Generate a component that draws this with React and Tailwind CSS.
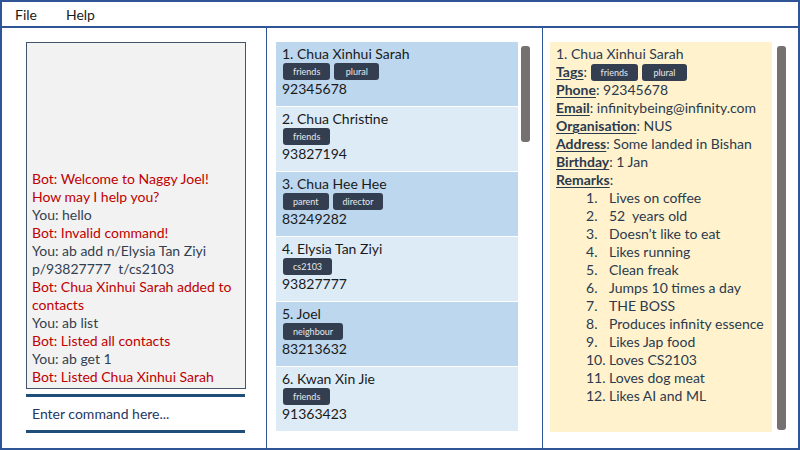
import React from "react";

const chat = [
  { who: "bot", text: "Bot: Welcome to Naggy Joel!" },
  { who: "bot", text: "How may I help you?" },
  { who: "you", text: "You: hello" },
  { who: "bot", text: "Bot: Invalid command!" },
  { who: "you", text: "You: ab add n/Elysia Tan Ziyi" },
  { who: "you", text: "p/93827777  t/cs2103" },
  { who: "bot", text: "Bot: Chua Xinhui Sarah added to" },
  { who: "bot", text: "contacts" },
  { who: "you", text: "You: ab list" },
  { who: "bot", text: "Bot: Listed all contacts" },
  { who: "you", text: "You: ab get 1" },
  { who: "bot", text: "Bot: Listed Chua Xinhui Sarah" },
];

const contacts = [
  { name: "1. Chua Xinhui Sarah", tags: ["friends", "plural"], phone: "92345678" },
  { name: "2. Chua Christine", tags: ["friends"], phone: "93827194" },
  { name: "3. Chua Hee Hee", tags: ["parent", "director"], phone: "83249282" },
  { name: "4. Elysia Tan Ziyi", tags: ["cs2103"], phone: "93827777" },
  { name: "5. Joel", tags: ["neighbour"], phone: "83213632" },
  { name: "6. Kwan Xin Jie", tags: ["friends"], phone: "91363423" },
];

const remarks = [
  "Lives on coffee",
  "52  years old",
  "Doesn’t like to eat",
  "Likes running",
  "Clean freak",
  "Jumps 10 times a day",
  "THE BOSS",
  "Produces infinity essence",
  "Likes Jap food",
  "Loves CS2103",
  "Loves dog meat",
  "Likes AI and ML",
];

const Tag = ({ children }) => (
  <span className="inline-flex items-center justify-center h-[17px] px-[10px] min-w-[45px] rounded-[3px] bg-[#333f50] text-[#e4e7ec] text-[9px] leading-none mr-[4px]">
    {children}
  </span>
);

const Label = ({ children }) => (
  <span className="underline font-bold text-[#2b3a4e] underline-offset-2">{children}</span>
);

const App = () => {
  return (
    <div
      className="w-[800px] h-[450px] border-2 border-[#2f5597] bg-white flex flex-col text-[14px] text-[#1a1a1a]"
      style={{ fontFamily: "Lato, 'Liberation Sans', sans-serif" }}
    >
      <div className="h-[26px] shrink-0 border-b-2 border-[#2f5597] flex items-center gap-[29px] pl-[13px] text-[14px]">
        <span>File</span>
        <span>Help</span>
      </div>
      <div className="flex flex-1 min-h-0">
        {/* command panel */}
        <div className="w-[265px] border-r border-[#2f5597] pl-[24px] pt-[14px] flex flex-col">
          <div className="w-[220px] h-[347px] bg-[#f2f2f2] border border-[#44546a] flex flex-col justify-end px-[5px] pb-[2px] leading-[18px]">
            {chat.map((c, i) => (
              <div key={i} className={`whitespace-pre ${c.who === "bot" ? "text-[#c00000]" : "text-[#333f50]"}`}>
                {c.text}
              </div>
            ))}
          </div>
          <div className="w-[219px] mt-[5px] border-t-[3px] border-b-[3px] border-[#1f4e79] h-[39px] flex items-center pl-[6px] text-[#1f3864]">
            Enter command here...
          </div>
        </div>
        {/* list panel */}
        <div className="w-[276px] border-r border-[#2f5597] pl-[9px] pt-[14px] flex gap-[3px]">
          <div className="w-[242px] flex flex-col gap-px h-[390px]">
            {contacts.map((c, i) => (
              <div
                key={i}
                className={`h-[64px] px-[6px] pt-[3px] leading-[18px] ${i % 2 === 0 ? "bg-[#bdd7ee]" : "bg-[#ddebf7]"}`}
              >
                <div>{c.name}</div>
                <div className="flex pl-px">
                  {c.tags.map((t) => (
                    <Tag key={t}>{t}</Tag>
                  ))}
                </div>
                <div>{c.phone}</div>
              </div>
            ))}
          </div>
          <div className="pt-[4px]">
            <div className="w-[9px] h-[96px] rounded-[3px] bg-[#767171]" />
          </div>
        </div>
        {/* detail panel */}
        <div className="flex-1 pl-[7px] pt-[14px] flex gap-[5px]">
          <div className="w-[222px] h-[390px] bg-[#fff2cc] px-[6px] pt-[3px] leading-[18px] text-[#2b3a4e]">
            <div>1. Chua Xinhui Sarah</div>
            <div className="flex items-center">
              <Label>Tags</Label>:&nbsp;
              <Tag>friends</Tag>
              <Tag>plural</Tag>
            </div>
            <div><Label>Phone</Label>: 92345678</div>
            <div><Label>Email</Label>: infinitybeing@infinity.com</div>
            <div><Label>Organisation</Label>: NUS</div>
            <div><Label>Address</Label>: Some landed in Bishan</div>
            <div><Label>Birthday</Label>: 1 Jan</div>
            <div><Label>Remarks</Label>:</div>
            <div className="pl-[30px]">
              {remarks.map((r, i) => (
                <div key={i} className="flex">
                  <span className="w-[23px] shrink-0">{i + 1}.</span>
                  <span className="whitespace-pre">{r}</span>
                </div>
              ))}
            </div>
          </div>
          <div className="pt-[4px]">
            <div className="w-[9px] h-[384px] rounded-[3px] bg-[#767171]" />
          </div>
        </div>
      </div>
    </div>
  );
};

export default App;
